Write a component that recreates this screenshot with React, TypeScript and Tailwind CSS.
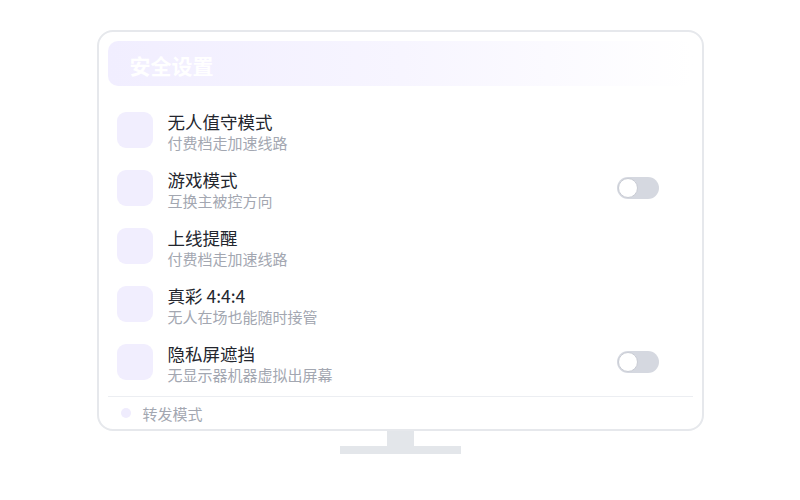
import React from "react";

type Row = { title: string; sub: string; toggle?: boolean };

const rows: Row[] = [
  { title: "无人值守模式", sub: "付费档走加速线路" },
  { title: "游戏模式", sub: "互换主被控方向", toggle: true },
  { title: "上线提醒", sub: "付费档走加速线路" },
  { title: "真彩 4:4:4", sub: "无人在场也能随时接管" },
  { title: "隐私屏遮挡", sub: "无显示器机器虚拟出屏幕", toggle: true },
];

function Toggle() {
  return (
    <div className="w-[42px] h-[22px] rounded-full bg-[#d5d8e0] relative">
      <div className="absolute left-[1px] top-[1px] w-[20px] h-[20px] rounded-full bg-white border border-[#c9ccd4]" />
    </div>
  );
}

export default function App() {
  return (
    <div
      className="w-[800px] h-[500px] bg-white flex flex-col items-center pt-[30px]"
      style={{ fontFamily: '"Noto Sans CJK SC", "Noto Sans", sans-serif' }}
    >
      <div className="w-[607px] border-2 border-[#e6e8ec] rounded-[16px] px-[9px] pt-[9px] flex flex-col bg-white">
        <div className="h-[45px] rounded-[10px] bg-gradient-to-r from-[#f1eeff] via-[#f7f5ff] to-white flex items-center pl-[22px]">
          <span className="text-white text-[21px] font-bold leading-none mt-[3px]">安全设置</span>
        </div>
        <div className="mt-[15px] flex flex-col">
          {rows.map((r) => (
            <div key={r.title} className="h-[58px] flex items-center pl-[9px] pr-[34px]">
              <div className="w-[36px] h-[36px] rounded-[9px] bg-[#f1eefe] shrink-0" />
              <div className="ml-[15px] flex flex-col flex-1 mt-[4px]">
                <span className="text-[17.5px] leading-[22px] text-[#23262e]">{r.title}</span>
                <span className="text-[15px] leading-[20px] text-[#a3a7b1]">{r.sub}</span>
              </div>
              {r.toggle && <Toggle />}
            </div>
          ))}
        </div>
        <div className="mt-[5px] border-t border-[#eceef2] h-[33px] flex items-center pl-[13px]">
          <div className="w-[10px] h-[10px] rounded-full bg-[#efecfd]" />
          <span className="ml-[12px] text-[15px] text-[#a3a7b1] leading-none">转发模式</span>
        </div>
      </div>
      <div className="w-[27px] h-[15px] bg-[#e3e6ea]" />
      <div className="w-[121px] h-[8px] bg-[#e3e6ea]" />
    </div>
  );
}
